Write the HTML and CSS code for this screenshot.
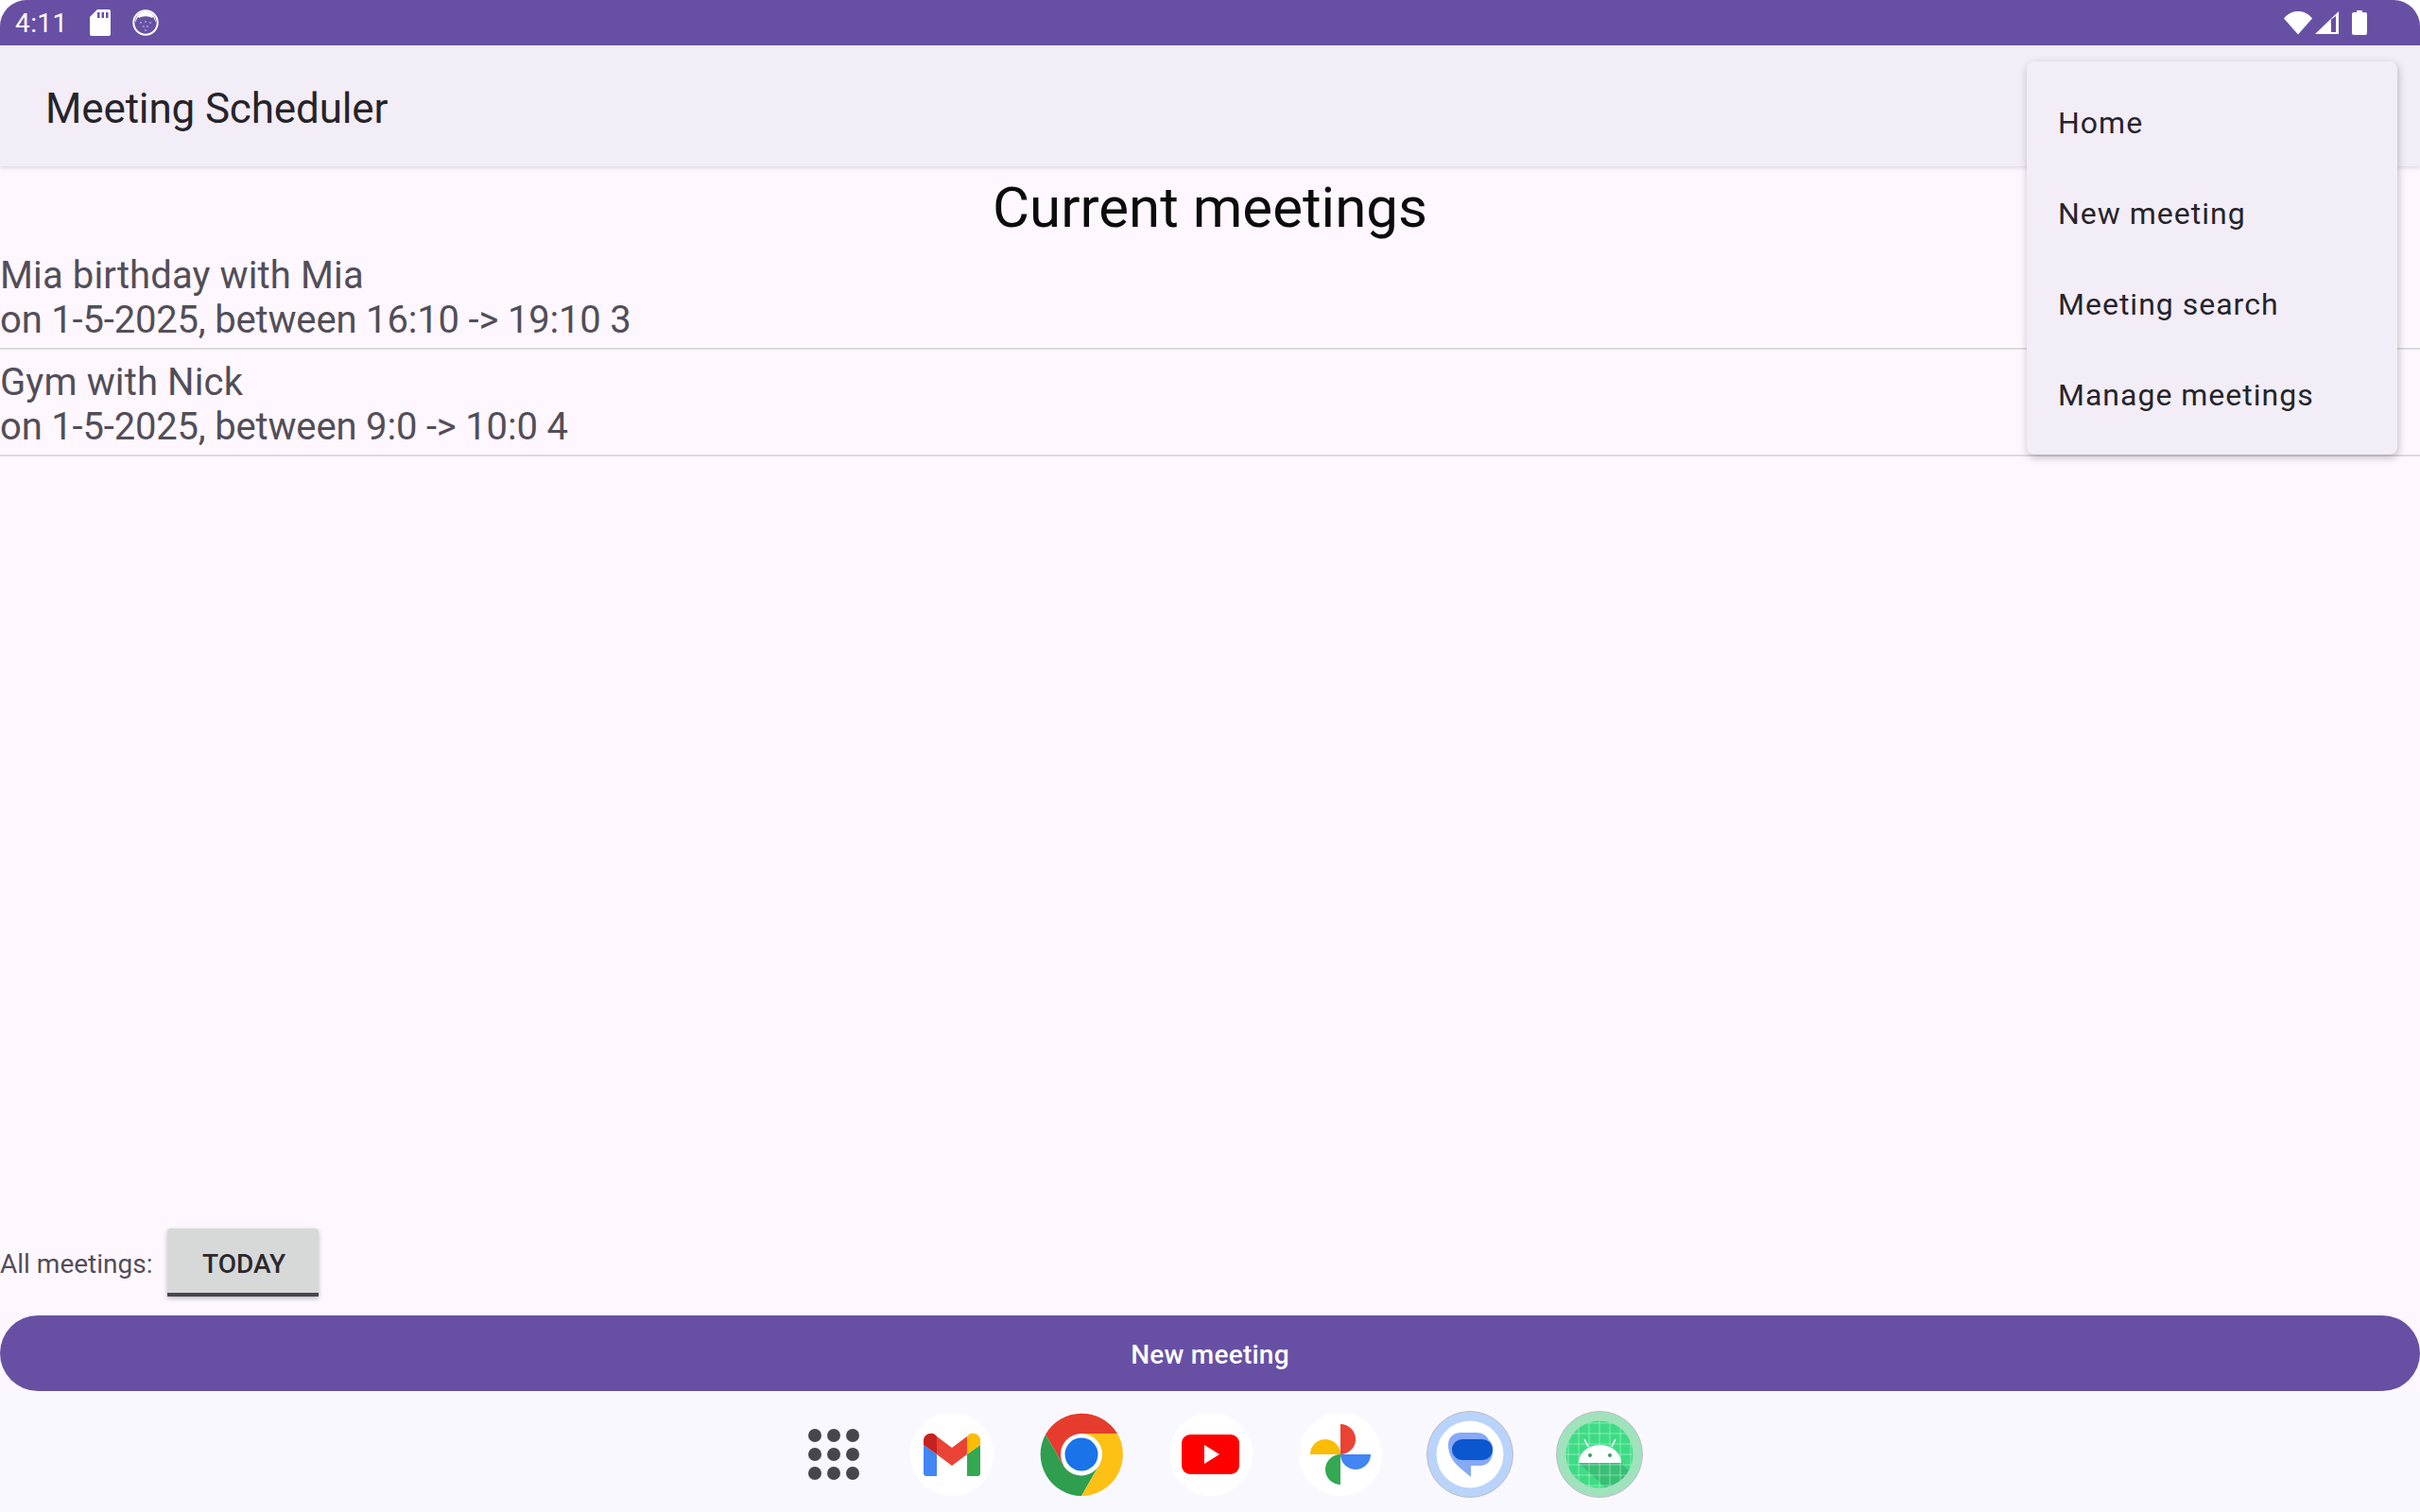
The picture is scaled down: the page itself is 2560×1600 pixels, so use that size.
FILE: index.html
```html
<!DOCTYPE html>
<html lang="en">
<head>
<meta charset="utf-8">
<title>Meeting Scheduler</title>
<link rel="stylesheet" href="styles.css">
</head>
<body>
<div class="screen">
  <header class="status">
    <div class="status-left">
      <span class="clock">4:11</span>
      <svg class="ic-sd" viewBox="0 0 22 28"><path fill="#fff" fill-rule="evenodd" d="M8 0h12a2 2 0 0 1 2 2v24a2 2 0 0 1-2 2H2a2 2 0 0 1-2-2V8zM8 3v6h2.500V3zM12.500 3v6H15V3zM17 3v6h2.500V3z"/></svg>
      <svg class="ic-cat" viewBox="0 0 28 28"><circle cx="14" cy="14" r="12.700" fill="none" stroke="#fff" stroke-width="2"/><path fill="#fff" d="M3 14C3 7 8 2 14 2s11 5 11 12c-1-2-2-5-3-6-1 1-2 1-3 0-3-1-7-1-10 0-1 1-2 1-3 0-1 1-2 4-3 6z"/><g fill="#fff"><circle cx="9" cy="14" r=".7"/><circle cx="14" cy="13" r=".7"/><circle cx="19" cy="14" r=".7"/><circle cx="12" cy="18" r=".7"/><circle cx="16" cy="18" r=".7"/><circle cx="14" cy="22" r=".7"/></g></svg>
    </div>
    <div class="status-right">
      <svg class="ic-wifi" viewBox="0 0 30 26"><path fill="#fff" d="M15 25.500 0 8.500C4 3.500 9 1 15 1s11 2.500 15 7.500z"/></svg>
      <svg class="ic-signal" viewBox="0 0 26 26"><path fill="#fff" fill-rule="evenodd" d="M25 1v24H0zM17 9.500V23h5V6z"/></svg>
      <svg class="ic-batt" viewBox="0 0 16 26"><path fill="#fff" d="M5 0h6v2h3a2 2 0 0 1 2 2v20a2 2 0 0 1-2 2H2a2 2 0 0 1-2-2V4a2 2 0 0 1 2-2h3z"/></svg>
    </div>
  </header>

  <div class="appbar"><h1 class="app-title">Meeting Scheduler</h1></div>

  <main class="content">
    <h2 class="heading">Current meetings</h2>
    <ul class="meetings">
      <li class="meeting"><span class="meeting-title">Mia birthday with Mia</span><span class="meeting-when">on 1-5-2025, between 16:10 -&gt; 19:10 3</span></li>
      <li class="meeting"><span class="meeting-title">Gym with Nick</span><span class="meeting-when">on 1-5-2025, between 9:0 -&gt; 10:0 4</span></li>
    </ul>
    <div class="all-row">
      <span class="all-label">All meetings:</span>
      <button class="today">TODAY</button>
    </div>
    <button class="new-btn">New meeting</button>
  </main>

  <nav class="dock">
    <svg class="apps" viewBox="0 0 54 54"><g fill="#47464f"><circle cx="7" cy="7" r="7"/><circle cx="27" cy="7" r="7"/><circle cx="47" cy="7" r="7"/><circle cx="7" cy="27" r="7"/><circle cx="27" cy="27" r="7"/><circle cx="47" cy="27" r="7"/><circle cx="7" cy="47" r="7"/><circle cx="27" cy="47" r="7"/><circle cx="47" cy="47" r="7"/></g></svg>

    <svg class="icon" viewBox="0 0 88 88"><circle cx="44" cy="44" r="44" fill="#fff"/><path fill="#4285f4" d="M14 34l14 10v23H17a3 3 0 0 1-3-3z"/><path fill="#34a853" d="M74 34 60 44v23h11a3 3 0 0 0 3-3z"/><path fill="#ea4335" d="M28 25l16 12 16-12v19L44 56 28 44z"/><path fill="#c5221f" d="M14 29c0-6 8-9 12-6l2 2v19L14 34z"/><path fill="#fbbc04" d="M74 29c0-6-8-9-12-6l-2 2v19l14-10z"/></svg>

    <svg class="icon" viewBox="0 0 88 88"><path fill="#e53c2e" d="M6 23A44 44 0 0 1 82 22H44L25 56z"/><path fill="#2f9e4f" d="M6 23 25 56A22 22 0 0 0 63 55L44 88A44 44 0 0 1 6 23z"/><path fill="#fdc116" d="M82 22A44 44 0 0 1 44 88L63 55 44 22z"/><circle cx="44" cy="44" r="22" fill="#fff"/><circle cx="44" cy="44" r="17.500" fill="#1a73e8"/></svg>

    <svg class="icon" viewBox="0 0 88 88"><circle cx="44" cy="44" r="44" fill="#fff"/><rect x="13" y="23" width="61" height="42" rx="9" fill="#f00"/><path fill="#fff" d="M37 34l16 10-16 10z"/></svg>

    <svg class="icon" viewBox="0 0 88 88"><circle cx="44" cy="44" r="44" fill="#fff"/><path fill="#fbbc04" d="M12 44a16 16 0 0 1 32 0z"/><path fill="#ea4335" d="M44 12a16 16 0 0 1 0 32z"/><path fill="#4285f4" d="M44 44h32a16 16 0 0 1-32 0z"/><path fill="#34a853" d="M44 44v32a16 16 0 0 1 0-32z"/></svg>

    <svg class="icon icon-wide" viewBox="0 0 92 92"><circle cx="46" cy="46" r="45.500" fill="#b9d3fb" stroke="#bdbdc2" stroke-width="1"/><circle cx="46" cy="46" r="35.500" fill="#fff"/><path fill="#86a9f8" d="M23 36c0-8 6-13 13-13h17c6 0 11 3 13 8 3 2 4 6 4 10v3c0 8-6 14-13 14H47v12L35 60C27 53 23 45 23 36z"/><rect x="27" y="30" width="43" height="22" rx="11" fill="#0b57d0"/></svg>

    <svg class="icon icon-wide" viewBox="0 0 92 92"><circle cx="46" cy="46" r="45.500" fill="#a0e2bc" stroke="#bdbdc2" stroke-width="1"/><clipPath id="andr"><circle cx="46" cy="46" r="35.500"/></clipPath><g clip-path="url(#andr)"><rect width="92" height="92" fill="#3ddc84"/><path fill="#35a86a" opacity=".55" d="M24 55h45l20 20-30 20-7-14z"/><path stroke="#fff" stroke-opacity=".4" stroke-width="1" fill="none" d="M8 13h76M8 24h76M8 35h76M8 46h76M8 57h76M8 68h76M8 79h76M13 8v76M24 8v76M35 8v76M46 8v76M57 8v76M68 8v76M79 8v76"/></g><path fill="#fff" d="M24 55a22.500 19 0 0 1 45 0z"/><path stroke="#fff" stroke-width="1.500" d="M34 38l-4-8M59 38l4-8"/><circle cx="36" cy="47" r="2" fill="#3a9a63"/><circle cx="57" cy="47" r="2" fill="#3a9a63"/></svg>
  </nav>

  <aside class="menu">
    <div class="menu-item">Home</div>
    <div class="menu-item">New meeting</div>
    <div class="menu-item">Meeting search</div>
    <div class="menu-item">Manage meetings</div>
  </aside>
</div>
</body>
</html>
```

FILE: styles.css
```css
* { box-sizing: border-box; }
html, body { margin: 0; padding: 0; }
body {
  width: 2560px;
  height: 1600px;
  overflow: hidden;
  background: #fff;
  font-family: Roboto, sans-serif;
}
.screen {
  position: relative;
  width: 2560px;
  height: 1600px;
  display: flex;
  flex-direction: column;
  background: #fef7ff;
  border-radius: 28px 28px 0 0;
  overflow: hidden;
}
.status {
  height: 48px;
  flex: none;
  background: #6750a4;
  display: flex;
  align-items: center;
  justify-content: space-between;
  padding: 0 56px 0 16px;
  color: #fff;
}
.status-left, .status-right { display: flex; align-items: center; }
.clock { font-size: 28px; letter-spacing: .4px; width: 78px; }
.ic-sd { width: 22px; height: 28px; margin-left: 1px; }
.ic-cat { width: 28px; height: 28px; margin-left: 23px; }
.ic-wifi { width: 30px; height: 26px; }
.ic-signal { width: 26px; height: 26px; margin-left: 3px; }
.ic-batt { width: 16px; height: 26px; margin-left: 13px; }
.appbar {
  height: 128px;
  flex: none;
  background: #f3edf7;
  display: flex;
  align-items: center;
  padding: 6px 0 0 48px;
  box-shadow: 0 2px 4px rgba(0, 0, 0, .12);
  position: relative;
}
.app-title {
  margin: 0;
  font-size: 44px;
  font-weight: 400;
  letter-spacing: -.15px;
  color: #26242a;
}
.content { flex: 1; display: flex; flex-direction: column; min-height: 0; }
.heading {
  margin: 0;
  height: 81px;
  padding-top: 6px;
  line-height: 76px;
  text-align: center;
  font-size: 60px;
  font-weight: 400;
  color: #0c0c0c;
}
.meetings { list-style: none; margin: 0; padding: 0; flex: 1; }
.meeting {
  height: 113px;
  padding-top: 11px;
  font-size: 40px;
  line-height: 47px;
  color: #524e58;
  border-bottom: 2px solid #dcd9de;
}
.meeting-title { display: block; letter-spacing: .12px; }
.meeting-when { display: block; letter-spacing: -.18px; }
.all-row { display: flex; align-items: center; height: 72px; }
.all-label { font-size: 28px; color: #524e58; width: 177px; padding-top: 2px; }
.today {
  width: 160px;
  height: 72px;
  border: 0;
  border-bottom: 4px solid #49454f;
  border-radius: 4px 4px 0 0;
  background: #d7d9d8;
  color: #2a282e;
  font: 500 28px Roboto, sans-serif;
  box-shadow: 0 2px 5px rgba(0, 0, 0, .25);
  padding: 6px 0 0 2px;
}
.new-btn {
  margin-top: 20px;
  height: 80px;
  width: 100%;
  border: 0;
  border-radius: 40px;
  background: #6750a4;
  color: #fff;
  font: 500 28px Roboto, sans-serif;
  letter-spacing: .25px;
  padding: 2px 0 0;
  flex: none;
}
.dock {
  height: 128px;
  flex: none;
  background: #faf8ff;
  display: flex;
  align-items: center;
  gap: 49px;
  padding: 6px 0 0 855px;
}
.apps { width: 54px; height: 54px; margin-right: 5px; flex: none; }
.icon { width: 88px; height: 88px; flex: none; }
.icon-wide { width: 92px; height: 92px; margin: 0 -2px; }
.menu {
  position: absolute;
  left: 2144px;
  top: 65px;
  width: 392px;
  height: 416px;
  background: #f3edf7;
  border-radius: 8px;
  padding: 16px 0;
  box-shadow: 1px 3px 8px rgba(0, 0, 0, .25);
}
.menu-item {
  height: 96px;
  display: flex;
  align-items: center;
  padding: 2px 0 0 33px;
  font-size: 32px;
  letter-spacing: 1px;
  color: #26242a;
}
```
